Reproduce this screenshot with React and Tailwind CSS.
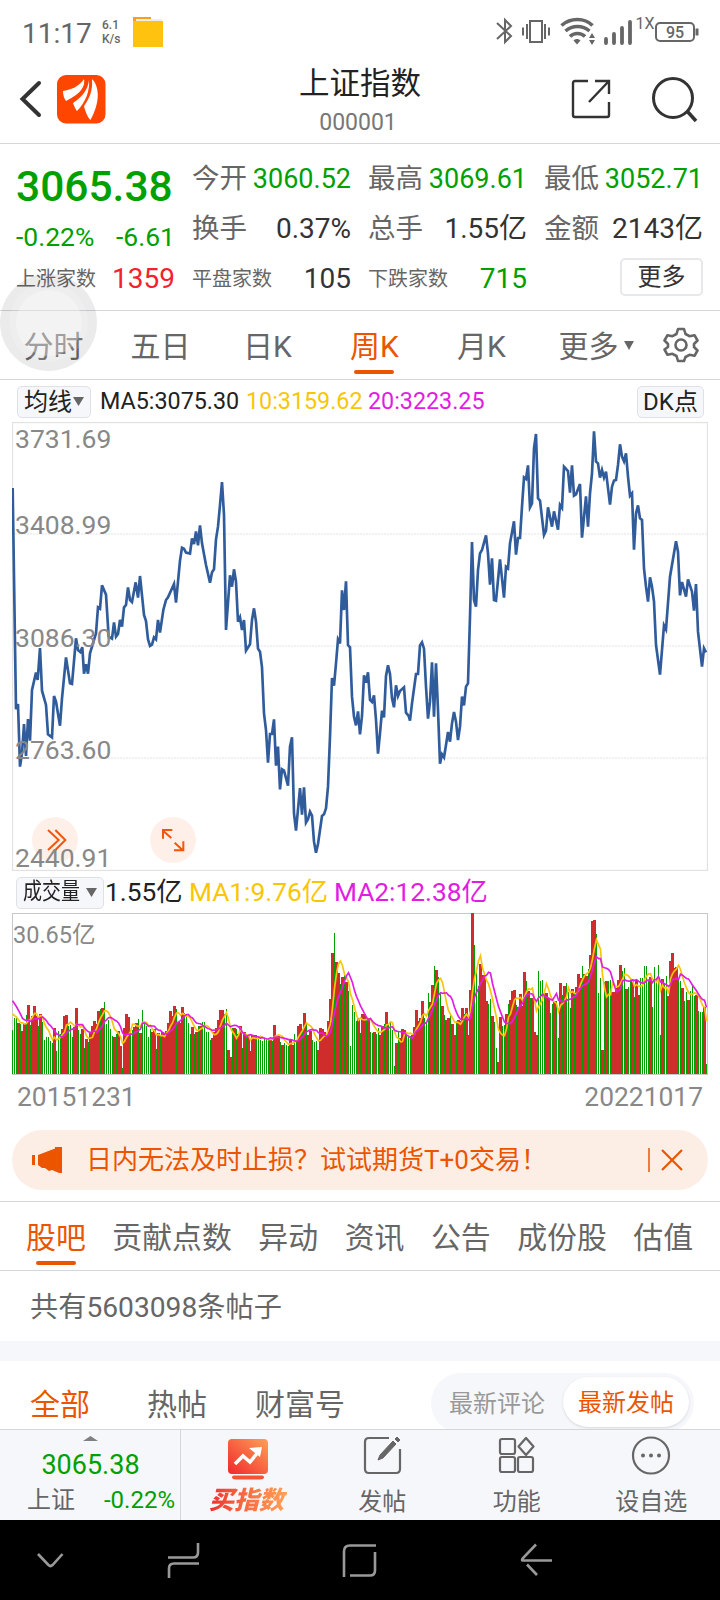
import React from 'react';
import clsx from 'clsx';

// weekly closes as x,y pairs on the 2085 x 1344 chart grid (offset by 36)
const PRICE_POINTS = `38,234 48,898 54,882 60,1070 66,1030 72,942 78,1038 84,927 90,992 96,840 108,788 113,810 120,714 126,842
138,885 144,973 156,982 162,858 168,875 180,947 186,865 198,742 210,820 216,822 228,685 234,720 241,726 247,712 252,791 258,763
264,791 270,730 288,670 294,592 300,596 306,526 318,554 326,680 336,686 342,637 348,680 354,672 360,630 366,650 372,592 378,585
384,532 390,570 396,576 407,517 414,563 420,498 432,615 438,633 444,688 450,708 456,704 462,682 468,688 474,630 480,668 490,600
498,570 504,562 522,522 528,578 540,452 546,413 552,416 558,428 570,431 576,385 582,402 588,364 594,406 600,346 606,400 618,465
630,518 636,487 642,478 648,388 654,350 660,285 666,216 672,315 678,660 690,496 696,530 702,478 708,515 714,635 720,622 726,660
732,630 738,722 750,703 756,630 762,595 768,635 774,716 780,725 786,772 792,910 798,960 804,1058 810,972 816,972 822,928 828,1067
834,1010 840,1138 846,1078 852,1082 864,1127 870,1010 876,982 882,1210 888,1262 900,1134 906,1214 912,1132 918,1238 924,1228
930,1205 936,1217 942,1295 948,1328 954,1302 966,1218 972,1213 978,1195 984,1130 990,980 996,804 1002,827 1008,760 1014,688
1020,700 1026,541 1032,600 1038,514 1044,705 1050,712 1056,860 1062,920 1068,946 1074,904 1080,973 1086,918 1092,796 1098,818
1104,787 1110,870 1116,876 1122,856 1128,930 1134,1031 1140,970 1146,902 1152,922 1158,798 1164,766 1170,792 1176,865 1182,892
1188,826 1194,858 1200,843 1212,832 1218,908 1226,918 1230,932 1236,880 1248,792 1254,792 1260,706 1266,697 1272,716 1278,830
1284,926 1290,875 1296,757 1302,920 1308,760 1314,900 1320,1061 1326,1033 1332,1042 1338,1005 1344,966 1350,995 1356,940
1362,906 1368,935 1374,990 1380,950 1386,860 1392,886 1398,830 1404,820 1410,620 1416,396 1422,570 1428,590 1434,480 1440,430
1446,420 1458,376 1464,430 1470,524 1476,445 1482,570 1488,572 1500,448 1512,563 1518,470 1524,475 1530,400 1542,334 1548,434
1554,384 1560,384 1566,290 1572,202 1578,207 1584,166 1590,292 1596,280 1602,115 1608,72 1614,265 1620,272 1632,375 1638,362
1644,292 1656,350 1662,304 1674,359 1680,285 1686,294 1692,170 1704,183 1710,248 1716,166 1722,257 1728,253 1740,222 1746,383
1758,259 1764,350 1770,250 1776,190 1782,64 1788,155 1794,160 1800,203 1806,180 1812,203 1818,185 1830,284 1836,230 1842,212
1848,210 1854,165 1860,103 1866,140 1872,154 1878,130 1884,200 1890,257 1896,250 1902,419 1908,310 1914,286 1920,325 1926,330
1932,475 1938,530 1944,575 1950,502 1956,530 1962,575 1968,705 1980,794 1992,646 1998,658 2010,500 2028,394 2034,425 2040,556
2046,516 2058,560 2064,508 2076,545 2082,602 2088,522 2094,665 2106,770 2112,715 2118,727`;

// r = up week, g = down week; the number is the top edge of the bar
const VOLUME_BASE = 492;
const VOLUMES = `g360 g325 g323 r340 g342 r362 r342 g316 r285 g345 r318 r288 r318 g348 r312 g337 g390 g381 g381 g393
g399 r354 g423 g363 g372 r357 r318 r315 g348 g345 g381 r350 r294 g360 g372 r357 g414 r387 g396 r366 r348 r333 r342 r303
g297 r294 g276 g342 g330 g357 g378 r381 g372 r363 r408 g474 r354 r312 r321 g366 g360 r351 r339 g327 r369 g300 g342 g348
g381 g357 r366 r357 g417 r369 g375 r366 r372 r363 r339 r303 r318 r288 g297 r336 r339 r291 g309 g318 g339 g372 r351 g372
r366 g348 r348 g336 g336 g366 g366 g390 r384 r366 r354 r330 r300 r300 g312 g297 r420 r441 g354 r354 g357 r372 r348 g414
r366 g372 r378 r423 r375 r375 g375 g378 g390 g393 g387 g387 g387 r387 g393 r345 r375 r375 g396 r405 g399 g405 g408 r387
r405 g372 g390 r348 r342 g357 r309 g336 r375 r363 g390 g396 g393 r420 r354 r357 r366 r378 r333 r267 r129 g69 r156 r189
g222 r201 g192 r216 g243 g408 g285 g306 g333 r324 g369 r312 r312 g324 r324 g366 g369 r366 g372 g354 r375 r348 g342 r306
g345 g336 g360 g468 r399 g366 r384 r357 r360 g372 g381 g378 r375 r351 r300 r333 r324 r273 g324 g336 g249 r276 r225 g168
r180 g201 g252 r288 g315 r330 r324 g309 r342 r375 g333 r330 r333 r294 g312 r294 r375 r240 r9 g105 g180 g228 r162 r195
r195 r273 g282 g267 r318 g336 g414 r456 r321 g348 g345 r312 g282 r270 r243 r240 g285 r291 r252 r288 r186 g213 r243 g264
r264 r366 r375 g183 g213 g210 g249 r249 r264 g309 g282 r273 g273 g384 r219 g255 r228 g219 g246 g294 r237 g252 r231 r192
r204 g168 r192 r198 g177 r135 r33 r30 g72 g249 g204 r420 g216 r213 g213 g210 r246 r246 r234 r210 r165 g183 g174 r237
g231 g204 r213 g261 r210 r255 g204 g204 g168 g168 g213 r201 g291 g171 g205 g165 g375 r207 g219 g198 r258 r153 r129 r174
r171 g204 g213 r234 g273 g246 r270 g243 g228 g258 r255 g303 g306 g306 r291 g462`
  .split(/\s+/)
  .map((v) => ({ up: v[0] === 'r', height: VOLUME_BASE - Number(v.slice(1)) }));

// volumes of the nine weeks before the first visible one
const PREVIOUS = [260, 260, 260, 260, 260, 192, 192, 192, 192];

const movingAverage = (size) => {
  const all = [...PREVIOUS, ...VOLUMES.map((v) => v.height)];
  return VOLUMES.map((_, i) => {
    const end = i + PREVIOUS.length + 1;
    const sum = all.slice(end - size, end).reduce((a, b) => a + b, 0);
    return `${1.5 + i * 6},${483 - sum / size}`;
  }).join(' ');
};

const StatusBar = () => (
  <div className="h-[64px] flex items-center text-[#666]">
    <span className="ml-[22px] mt-[3px] text-[28px] leading-none w-[74px]">11:17</span>
    <div className="ml-[6px] w-[22px] text-[12px] leading-[14px] font-medium">
      <div>6.1</div>
      <div>K/s</div>
    </div>
    <svg className="ml-[9px]" width="30" height="30" viewBox="0 0 30 30">
      <path d="M0 0h18v4H0z" fill="#f9a01b" />
      <path d="M3 2h26v6H3z" fill="#eee" />
      <path d="M0 4h30v26H0z" fill="#ffc20e" />
    </svg>
    <svg className="ml-auto" width="224" height="36" viewBox="0 0 224 36" fill="none" stroke="#666" strokeWidth="2">
      {/* bluetooth */}
      <path d="M1 9l14 13-6 6V6l6 6L1 25" />
      {/* vibrate */}
      <path d="M34 7h12v21H34zM31 10v15M49 10v15M27 13.500v8M53 13.500v8" />
      {/* wifi */}
      <g strokeWidth="3.600">
        <path d="M65.500 11.500c9-8 23-8 31 0" />
        <path d="M69.500 17c7-6 17-6 24 0" />
        <path d="M74 22.500c4-4 11-4 15 0" />
      </g>
      <path d="M77.500 26.500c2-2 5-2 7 0l-3.500 4z" fill="#666" stroke="none" />
      <path d="M93 24l3-5 3 5zM93 26h6l-3 5z" fill="#666" stroke="none" />
      {/* signal */}
      <path d="M110 25v4M118 20v9M126 14v15M134 8v21" strokeWidth="3.800" strokeLinecap="round" />
      {/* battery */}
      <rect x="160" y="9" width="38" height="18" rx="4" />
      <path d="M201 14.500v7" strokeWidth="3" />
      <text x="139.500" y="15" fontSize="16" fill="#666" stroke="none">1X</text>
      <text x="170" y="24" fontSize="16" fontWeight="500" fill="#666" stroke="none">95</text>
    </svg>
  </div>
);

const Header = () => (
  <header className="h-[80px] border-b border-[#d4d6da] flex items-center">
    <svg className="ml-[19px] -mt-[10px]" width="24" height="40" viewBox="0 0 24 40" fill="none" stroke="#333" strokeWidth="4">
      <path d="M20 4L3.500 20 20 36" strokeLinecap="round" />
    </svg>
    <svg className="ml-[14px] -mt-[9px]" width="49" height="49" viewBox="0 0 49 49">
      <rect width="48.500" height="48.500" rx="9" fill="#fe4600" />
      <g fill="#fff">
        <path d="M6 16C13 15 22 12 27 4C29 14 19 21 9 26C7 23 6 20 6 16z" />
        <path d="M32 5C33 15 29 27 20 36C19 35 17 31 16 28C25 22 31 15 32 5z" />
        <path d="M35 4C43 12 43 28 33.500 45C31 43 28 36 27 31C32 24 36 16 35 4z" />
      </g>
    </svg>
    <div className="ml-[154px] w-[196px] text-center">
      <div className="pl-[4px] text-[30.500px] leading-[38px] text-[#222]">上证指数</div>
      <div className="text-[23px] leading-[38px] mt-[1px] text-[#777]">000001</div>
    </div>
    <svg className="ml-[113px] -mt-[10px]" width="44" height="44" viewBox="0 0 44 44" fill="none" stroke="#333" strokeWidth="2.400">
      <path d="M19 4H6Q4 4 4 6V38Q4 40 6 40H38Q40 40 40 38V25M26 4H40V17M40 4L20 25" />
    </svg>
    <svg className="ml-[38px] -mt-[10px]" width="48" height="48" viewBox="0 0 48 48" fill="none" stroke="#333" strokeWidth="3">
      <circle cx="22" cy="23" r="19.500" />
      <path d="M36 36l9 10" strokeWidth="3.500" />
    </svg>
  </header>
);

const Stat = ({ label, value, color = 'text-[#333]', small }) => (
  <div className="h-[50px] flex items-center justify-between whitespace-nowrap">
    <span className={clsx('text-[#666]', small ? 'text-[20px]' : 'text-[27.500px]')}>{label}</span>
    <span className={clsx(color, small ? 'text-[28px]' : 'text-[27px]')}>{value}</span>
  </div>
);

const Quote = () => (
  <section className="h-[167px] border-b border-[#d4d6da] pt-[10px] pl-[16px] flex gap-[17px]">
    <div className="w-[159px] text-[#00a000]">
      <div className="h-[66px] flex items-center text-[42.500px] font-medium">3065.38</div>
      <div className="h-[34px] flex items-center justify-between text-[26.500px]">
        <span>-0.22%</span>
        <span>-6.61</span>
      </div>
      <Stat label="上涨家数" value="1359" color="text-[#f5222d]" small />
    </div>
    <div className="w-[159px]">
      <Stat label="今开" value="3060.52" color="text-[#00a000]" />
      <Stat label="换手" value={<span className="text-[28px]">0.37%</span>} />
      <Stat label="平盘家数" value="105" small />
    </div>
    <div className="w-[159px]">
      <Stat label="最高" value="3069.61" color="text-[#00a000]" />
      <Stat label="总手" value={<span className="text-[28px]">1.55亿</span>} />
      <Stat label="下跌家数" value="715" color="text-[#00a000]" small />
    </div>
    <div className="w-[159px]">
      <Stat label="最低" value="3052.71" color="text-[#00a000]" />
      <Stat label="金额" value={<span className="text-[28px]">2143亿</span>} />
      <button className="block ml-auto mt-[4px] w-[83px] h-[38px] rounded-[5px] border-2 border-[#e6e8ec] text-[24px] leading-[32px] text-[#333]">
        更多
      </button>
    </div>
  </section>
);

const PeriodTabs = () => (
  <nav className="h-[69px] border-b border-[#d4d6da] flex text-[30px] text-[#666]">
    {['分时', '五日', '日K', '周K', '月K'].map((name) => {
      const active = name === '周K';
      return (
        <div key={name} className={clsx('w-[107px] flex flex-col items-center', active && 'text-[#eb5500]')}>
          <span className="h-[59px] leading-[71px]">{name}</span>
          {active && <span className="w-[40px] h-[4px] mr-[1px] rounded-full bg-[#eb5500]" />}
        </div>
      );
    })}
    <div className="w-[122px] flex items-center justify-center gap-[5px] pt-[2px]">
      更多
      <svg className="mb-[2px]" width="10" height="9" viewBox="0 0 11 10"><path d="M0 0h11L5.500 10z" fill="#666" /></svg>
    </div>
    <div className="w-[48px] flex items-center justify-center">
      <svg width="36" height="36" viewBox="0 0 36 36" fill="none" stroke="#666" strokeWidth="2.600" strokeLinejoin="round">
        <path d="M15 2h6l1.500 5 4 2.200 5-1 3 5.300-3.500 3.500v3l3.500 3.500-3 5.300-5-1-4 2.200L21 34h-6l-1.500-5-4-2.200-5 1-3-5.300L5 20v-3l-3.500-3.500 3-5.300 5 1 4-2.200z" />
        <circle cx="18" cy="18" r="5.500" />
      </svg>
    </div>
  </nav>
);

const Legend = () => (
  <div className="h-[42px] flex items-center pt-px px-[16px] text-[23.300px] whitespace-nowrap">
    <span className="ml-px w-[74px] h-[32px] flex items-center justify-center gap-[1px] rounded-[5px] border border-[#dfe1e7] bg-[#f6f7fa] text-[24px] text-[#222]">
      均线
      <svg width="11" height="9" viewBox="0 0 11 9"><path d="M0 0h11L5.500 9z" fill="#666" /></svg>
    </span>
    <span className="ml-[9px] w-[146px] text-[#222]">MA5:3075.30</span>
    <span className="w-[122px] text-[#f9c606]">10:3159.62</span>
    <span className="text-[#e31ce3]">20:3223.25</span>
    <span className="ml-auto w-[67px] h-[32px] flex items-center justify-center rounded-[5px] border border-[#dfe1e7] bg-[#f6f7fa] text-[24px] text-[#222]">
      DK点
    </span>
  </div>
);

const PriceChart = () => (
  <div className="relative mx-[12px] w-[696px] h-[449px] text-[26.500px] leading-none text-[#888]">
    <svg width="696" height="449" viewBox="0 0 2088 1347" fill="none">
      <rect x="1.500" y="1.500" width="2085" height="1344" stroke="#e2e2e2" strokeWidth="4" />
      <path d="M0 336h2085M0 672h2085M0 1008h2085" stroke="#ededed" strokeWidth="4" strokeDasharray="6 3" />
      <polyline points={PRICE_POINTS} transform="translate(-36 -36)" stroke="#305c9b" strokeWidth="8" />
      <g fill="#fef0e9">
        <circle cx="129" cy="1254" r="69" />
        <circle cx="483" cy="1254" r="69" />
      </g>
      <g stroke="#f2560a" strokeWidth="6">
        <path d="M108 1224l32 30-32 30M130 1224l30 30-30 30" />
        <path d="M453 1250v-26h28M453 1226l25 22M488 1262l26 24M514 1258v27h-28" />
      </g>
    </svg>
    <span className="absolute left-[3px] top-[4px]">3731.69</span>
    <span className="absolute left-[3px] top-[90px]">3408.99</span>
    <span className="absolute left-[3px] top-[203px]">3086.30</span>
    <span className="absolute left-[3px] top-[315px]">2763.60</span>
    <span className="absolute left-[3px] top-[423px]">2440.91</span>
  </div>
);

const VolumeLegend = () => (
  <div className="h-[42px] flex items-center pt-px pl-[16px] text-[26.300px] whitespace-nowrap">
    <span className="w-[88px] h-[32px] flex items-center justify-center gap-[6px] rounded-[5px] border border-[#dfe1e7] bg-[#f6f7fa] text-[19px] text-[#222]">
      <span className="inline-block scale-y-[1.2]">成交量</span>
      <svg width="11" height="9" viewBox="0 0 11 9"><path d="M0 0h11L5.500 9z" fill="#666" /></svg>
    </span>
    <span className="ml-[1px] w-[84px] text-[#222]">1.55亿</span>
    <span className="w-[145px] text-[#f9c606]">MA1:9.76亿</span>
    <span className="text-[#e31ce3]">MA2:12.38亿</span>
  </div>
);

const VolumeChart = () => (
  <div className="relative mx-[12px] w-[696px] h-[162px]">
    <svg width="696" height="162" viewBox="0 0 2088 486" fill="none">
      <rect x="1.500" y="1.500" width="2085" height="483" stroke="#c8c8c8" strokeWidth="3" />
      <g shapeRendering="crispEdges">
        {VOLUMES.map((v, i) => (
          <rect
            key={i}
            x={v.up ? i * 6 - 3 : i * 6}
            y={483 - v.height}
            width={v.up ? 9 : 3}
            height={v.height}
            fill={v.up ? '#cf2d2b' : '#00a000'}
          />
        ))}
      </g>
      <polyline points={movingAverage(5)} stroke="#f9c606" strokeWidth="5" />
      <polyline points={movingAverage(10)} stroke="#e31ce3" strokeWidth="5" />
    </svg>
    <span className="absolute left-[1px] top-[9px] text-[23.500px] leading-[26px] text-[#888]">30.65亿</span>
  </div>
);

const Notice = () => (
  <div className="mx-[12px] h-[60px] rounded-full bg-[#fdeee5] flex items-center text-[#eb5500]">
    <svg className="ml-[20px]" width="31" height="28" viewBox="0 0 31 28" fill="#eb5500">
      <path d="M0 9h3v10H0zM6 9l17-6.500V1h7v26h-3l-7-3-3 1-4-3-3 0-4-3z" />
    </svg>
    <span className="ml-[23px] mt-px text-[26px] whitespace-nowrap">日内无法及时止损？试试期货T+0交易！</span>
    <span className="ml-auto w-[2px] h-[24px] bg-[#ef7a3a]" />
    <svg className="ml-[10px] mr-[24px]" width="24" height="24" viewBox="0 0 24 24" stroke="#eb5500" strokeWidth="2.200">
      <path d="M2 2l20 20M22 2L2 22" />
    </svg>
  </div>
);

const SectionTabs = () => (
  <nav className="h-[70px] border-y border-[#d4d6da] pl-[26px] flex gap-[26.500px] text-[29.900px] text-[#666] whitespace-nowrap">
    {['股吧', '贡献点数', '异动', '资讯', '公告', '成份股', '估值'].map((name, i) => (
      <div key={name} className={clsx('flex flex-col items-center', i === 0 && 'text-[#eb5500]')}>
        <span className="h-[59px] leading-[71px]">{name}</span>
        {i === 0 && <span className="w-[40px] h-[4px] rounded-full bg-[#eb5500]" />}
      </div>
    ))}
  </nav>
);

const PostFilter = () => (
  <div className="h-[68px] overflow-hidden flex text-[30px] text-[#666] whitespace-nowrap">
    <span className="ml-[30px] w-[117px] leading-[87px] text-[#eb5500]">全部</span>
    <span className="w-[108px] leading-[87px]">热帖</span>
    <span className="leading-[87px]">财富号</span>
    <div className="ml-auto mr-[26px] mt-[12px] w-[263px] h-[60px] shrink-0 rounded-full bg-[#f6f7fa] flex items-center text-[24px]">
      <span className="w-[132px] pt-[2px] text-center text-[#999]">最新评论</span>
      <span className="w-[126px] h-[50px] leading-[53px] mb-[2px] rounded-full bg-white text-center text-[#eb5500] shadow-sm">最新发帖</span>
    </div>
  </div>
);

const NavItem = ({ label, children }) => (
  <div className="w-[134.500px] flex flex-col items-center text-[24px] text-[#666]">
    <svg className="mt-[3px]" width="44" height="44" viewBox="0 0 44 44" fill="none" stroke="#666" strokeWidth="2.200">
      {children}
    </svg>
    <span className="mt-[9px] leading-[32px]">{label}</span>
  </div>
);

const BottomBar = () => (
  <footer className="h-[91px] border-t border-[#d4d6da] bg-[#f6f7fa] flex">
    <div className="w-[181px] border-r border-[#d4d6da] flex flex-col">
      <svg className="mx-auto mt-[6px]" width="15" height="6" viewBox="0 0 15 6"><path d="M0 5L7.500 0 15 5z" fill="#808080" /></svg>
      <div className="h-[46px] leading-[46px] pl-px text-center text-[27px] text-[#00a000]">3065.38</div>
      <div className="flex justify-between pl-[27px] pr-[5px] leading-[24px] text-[24px]">
        <span className="text-[#666]">上证</span>
        <span className="text-[#00a000]">-0.22%</span>
      </div>
    </div>
    <div className="w-[134px] flex flex-col items-center">
      <svg className="mt-[8px]" width="42" height="42" viewBox="0 0 42 42">
        <defs>
          <linearGradient id="buy" x1="0" y1="1" x2="1" y2="0">
            <stop offset="0" stopColor="#f0282d" />
            <stop offset="1" stopColor="#ffa057" />
          </linearGradient>
        </defs>
        <rect x="1" y="1" width="40" height="35" rx="4" fill="url(#buy)" />
        <path d="M5 39q0-1.500 2-1.500h28q2 0 2 1.500 0 2.500-4 2.500H9q-4 0-4-2.500z" fill="#f55338" />
        <path d="M8 26l8-8 7 6 9-11" fill="none" stroke="#fff" strokeWidth="3.500" />
        <path d="M22 10l13-1-2 10z" fill="#fff" />
      </svg>
      <span className="mt-[5px] pr-[3px] leading-[32px] text-[25px] font-black italic bg-linear-to-r from-[#f0282d] to-[#ffa057] bg-clip-text text-transparent">
        买指数
      </span>
    </div>
    <NavItem label="发帖">
      <path d="M29 5H9Q5 5 5 9V36Q5 40 9 40H36Q40 40 40 36V16" />
      <path d="M18 27l2-5L33 8l3 3L23 25z" fill="#666" strokeWidth="1" />
      <path d="M35 6l2-2 3 3-2 2z" fill="#666" strokeWidth="1" />
    </NavItem>
    <NavItem label="功能">
      <rect x="5" y="6" width="15" height="15" rx="2" />
      <rect x="5" y="24" width="15" height="15" rx="2" />
      <rect x="23" y="24" width="15" height="15" rx="2" />
      <path d="M31 5l7.500 8.500-7.500 8.500-7.500-8.500z" strokeLinejoin="round" />
    </NavItem>
    <NavItem label="设自选">
      <circle cx="22" cy="22.500" r="18" />
      <g fill="#666" stroke="none">
        <circle cx="14" cy="22.500" r="2" />
        <circle cx="22" cy="22.500" r="2" />
        <circle cx="30" cy="22.500" r="2" />
      </g>
    </NavItem>
  </footer>
);

const SystemNav = () => (
  <div className="h-[80px] bg-black">
    <svg width="720" height="80" viewBox="0 0 720 80" fill="none" stroke="#999" strokeWidth="2.600">
      <path d="M38 34l10.500 11q2 2 4 0L62.500 34" />
      <path d="M168 37.500h25q5 0 5-5V23M199 43.500h-25q-5 0-5 5V58" />
      <path d="M376 25.500H350q-6 0-6 6V57M350 55.500h20q5 0 5-5V32" />
      <path d="M552 40.500H523q-2 0 0-2.500L536 24.500M527 44.500l10 10.500" />
    </svg>
  </div>
);

function App() {
  return (
    <div className="relative w-[720px] h-[1600px] overflow-hidden bg-white font-['Roboto','Noto_Sans_CJK_SC',sans-serif]">
      <StatusBar />
      <Header />
      <Quote />
      <PeriodTabs />
      <Legend />
      <PriceChart />
      <VolumeLegend />
      <VolumeChart />
      <div className="h-[55px] flex justify-between px-[17px] text-[26.400px] leading-[44px] text-[#888]">
        <span>20151231</span>
        <span>20221017</span>
      </div>
      <Notice />
      <div className="h-[11px]" />
      <SectionTabs />
      <div className="h-[70px] pl-[30px] leading-[73px] text-[28.200px] text-[#666]">共有5603098条帖子</div>
      <div className="h-[20px] bg-[#f6f7fa]" />
      <PostFilter />
      <BottomBar />
      <SystemNav />
      {/* floating assist ball */}
      <div className="absolute left-0 top-[274px] w-[97px] h-[97px] rounded-full bg-black/8 flex items-center justify-center">
        <div className="w-[79px] h-[79px] rounded-full bg-white/15 flex items-center justify-center">
          <div className="w-[66px] h-[66px] rounded-full bg-white/30" />
        </div>
      </div>
    </div>
  );
}

export default App;
